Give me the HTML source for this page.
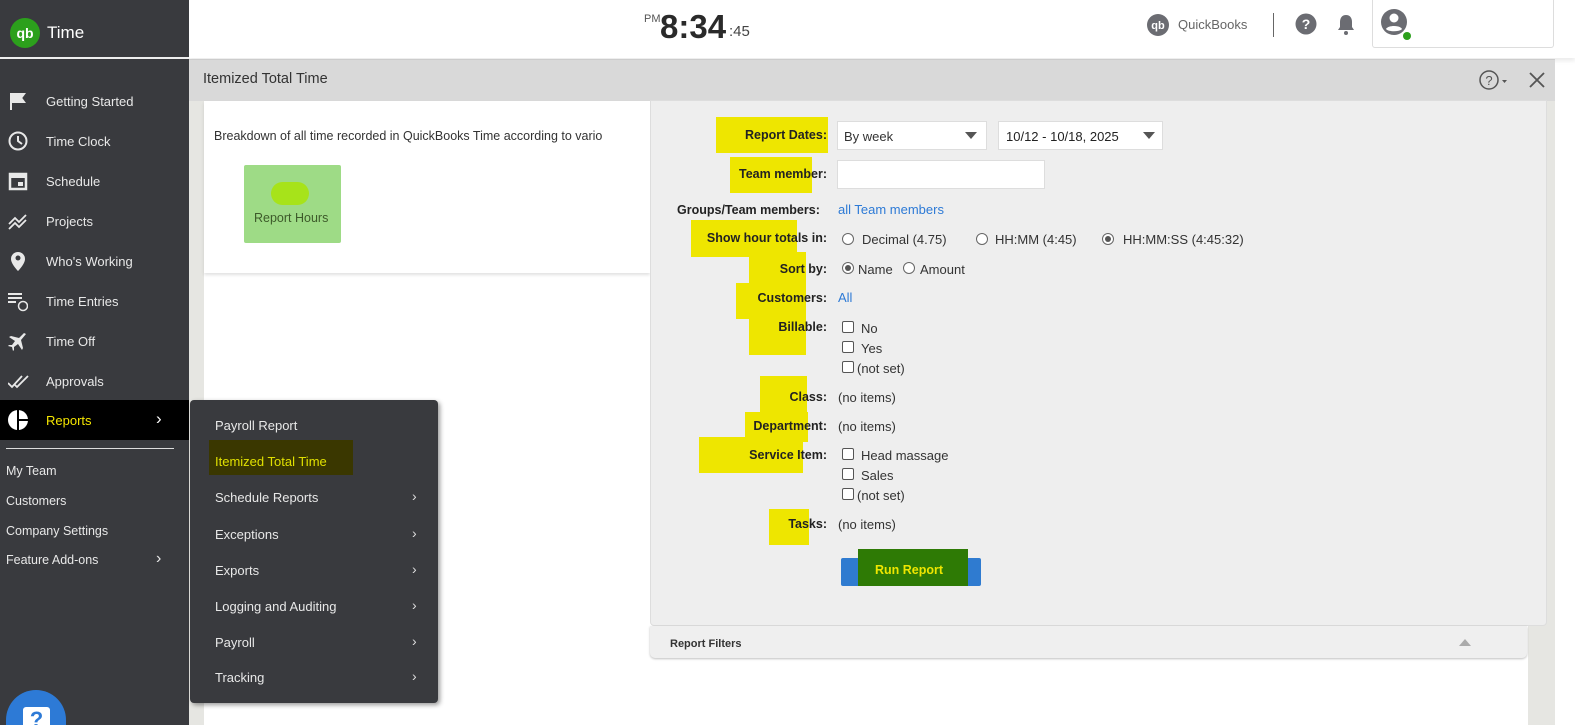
<!DOCTYPE html>
<html style="width:1575px;height:725px;overflow:hidden"><head><meta charset="utf-8"><style>
*{box-sizing:border-box;margin:0;padding:0}
body{width:1575px;height:725px;overflow:hidden;position:relative;background:#fff;font-family:"Liberation Sans",sans-serif;}
.abs{position:absolute}
.side{left:0;top:0;width:189px;height:725px;background:#393a3e;}
.nav{position:absolute;left:0;width:189px;height:40px;color:#e8e8e8;font-size:13px;}
.nav span{position:absolute;left:46px;top:13px}
.nav svg{position:absolute;left:8px;top:10px}
.lk{position:absolute;left:6px;color:#e8e8e8;font-size:12.5px}
.menu{left:190px;top:400px;width:248px;height:303px;background:#393a3e;border-radius:4px;box-shadow:2px 2px 5px rgba(0,0,0,.4)}
.mi{position:absolute;left:25px;color:#e8e8e8;font-size:13px}
.chev{position:absolute;left:222px;color:#ddd;font-size:14px}
.lbl{position:absolute;font-weight:bold;font-size:12.5px;color:#222;text-align:right}
.hl{position:absolute;background:#eee600}
.t{position:absolute;font-size:13px;color:#333}
.rad{position:absolute;width:12px;height:12px;border:1px solid #666;border-radius:50%;background:#fff}
.rad.on::after{content:"";position:absolute;left:2px;top:2px;width:6px;height:6px;border-radius:50%;background:#555}
.cb{position:absolute;width:12px;height:12px;border:1px solid #555;border-radius:2px;background:#fff}
.blue{color:#2d7ad6}
</style></head><body>
<div class="abs" style="left:189px;top:0;width:1386px;height:58px;background:#fff;box-shadow:0 3px 4px rgba(0,0,0,.08)"></div>
<div class="abs" style="left:644px;top:13px;font-size:11px;color:#555">PM</div>
<div class="abs" style="left:660px;top:8px;font-size:33px;font-weight:bold;color:#2a2a2a">8:34</div>
<div class="abs" style="left:729px;top:23px;font-size:15px;color:#444">:45</div>
<svg class="abs" style="left:1146px;top:13px" width="24" height="24"><circle cx="12" cy="12" r="11" fill="#6b6c72"/><text x="12" y="16" font-size="11" fill="#fff" text-anchor="middle" font-family="Liberation Sans" font-weight="bold">qb</text></svg>
<div class="abs" style="left:1178px;top:17px;font-size:13px;color:#666">QuickBooks</div>
<div class="abs" style="left:1273px;top:13px;width:1px;height:24px;background:#666"></div>
<svg class="abs" style="left:1295px;top:13px" width="22" height="22"><circle cx="11" cy="11" r="10.5" fill="#6b6c72"/><text x="11" y="16" font-size="14" fill="#fff" text-anchor="middle" font-weight="bold" font-family="Liberation Sans">?</text></svg>
<svg class="abs" style="left:1336px;top:13px" width="20" height="24"><path d="M10 2c-4 0-6 3-6 7v5l-2 3h16l-2-3V9c0-4-2-7-6-7z" fill="#6b6c72"/><circle cx="10" cy="20" r="2" fill="#6b6c72"/></svg>
<div class="abs" style="left:1372px;top:0;width:182px;height:48px;border:1px solid #ddd;border-top:none;border-radius:0 0 3px 3px;background:#fff"></div>
<svg class="abs" style="left:1380px;top:8px" width="32" height="32"><circle cx="14" cy="14" r="13" fill="#6b6c72"/><circle cx="14" cy="10" r="4.5" fill="#fff"/><path d="M6 21c2-4 14-4 16 0c-2 3-14 3-16 0z" fill="#fff"/><circle cx="27" cy="28" r="4" fill="#2ca01c"/></svg>
<div class="abs side"></div>
<svg class="abs" style="left:10px;top:18px" width="30" height="30"><circle cx="15" cy="15" r="15" fill="#2ca01c"/><text x="15" y="20" font-size="14" font-weight="bold" fill="#fff" text-anchor="middle" font-family="Liberation Sans">qb</text></svg>
<div class="abs" style="left:47px;top:23px;font-size:17px;color:#fff">Time</div>
<div class="abs" style="left:0;top:57px;width:189px;height:2px;background:#eee"></div>
<div class="nav" style="top:81px"><svg width="20" height="20"><path d="M3 2v17M3 3h13l-3 4 3 4H3" fill="#e8e8e8" stroke="#e8e8e8" stroke-width="2"/></svg><span>Getting Started</span></div>
<div class="nav" style="top:121px"><svg width="20" height="20"><circle cx="10" cy="10" r="8.5" fill="none" stroke="#e8e8e8" stroke-width="2"/><path d="M10 5v5l4 3" stroke="#e8e8e8" stroke-width="2" fill="none"/></svg><span>Time Clock</span></div>
<div class="nav" style="top:161px"><svg width="20" height="20"><rect x="2" y="3" width="16" height="15" fill="none" stroke="#e8e8e8" stroke-width="2.5"/><rect x="2" y="3" width="16" height="4" fill="#e8e8e8"/><rect x="10" y="11" width="5" height="4" fill="#e8e8e8"/></svg><span>Schedule</span></div>
<div class="nav" style="top:201px"><svg width="20" height="20"><path d="M1 13l6-6 4 4 7-7M1 18l6-6 4 4 7-7" stroke="#e8e8e8" stroke-width="1.8" fill="none"/></svg><span>Projects</span></div>
<div class="nav" style="top:241px"><svg width="20" height="20"><path d="M10 1a7 7 0 0 0-7 7c0 5 7 12 7 12s7-7 7-12a7 7 0 0 0-7-7z" fill="#e8e8e8"/><circle cx="10" cy="7" r="2.5" fill="#393a3e"/></svg><span>Who's Working</span></div>
<div class="nav" style="top:281px"><svg width="20" height="22"><path d="M0 3h14M0 7h14M0 11h8" stroke="#e8e8e8" stroke-width="2"/><circle cx="15" cy="15" r="4.5" fill="none" stroke="#e8e8e8" stroke-width="1.5"/></svg><span>Time Entries</span></div>
<div class="nav" style="top:321px"><svg width="20" height="20"><path d="M18 3l-2-1-5 5-8-2-2 1 6 4-3 4H1l-1 1 4 1 1 4 1-1v-3l4-3 4 6 1-2-2-8z" fill="#e8e8e8"/></svg><span>Time Off</span></div>
<div class="nav" style="top:361px"><svg width="24" height="20"><path d="M0 12l4 4 10-11M7 14l2 2 11-11" stroke="#e8e8e8" stroke-width="1.8" fill="none"/></svg><span>Approvals</span></div>
<div class="nav" style="top:400px;background:#000"><svg width="22" height="22"><circle cx="10" cy="10" r="10" fill="#fff"/><path d="M10 0v20M10 10h10" stroke="#000" stroke-width="2"/></svg><span style="color:#f5e600">Reports</span><span style="left:156px;top:9px;font-size:17px;color:#fff">›</span></div>
<div class="abs" style="left:6px;top:448px;width:168px;height:1px;background:#ddd"></div>
<div class="lk" style="top:464px">My Team</div>
<div class="lk" style="top:494px">Customers</div>
<div class="lk" style="top:524px">Company Settings</div>
<div class="lk" style="top:553px">Feature Add-ons</div>
<div class="lk" style="top:550px;left:156px;font-size:16px">›</div>
<div class="abs" style="left:6px;top:690px;width:60px;height:35px;border-radius:30px 30px 0 0;background:#2d7ad6;overflow:hidden"><div style="position:absolute;left:17px;top:17px;width:27px;height:27px;background:#fff;border-radius:3px;color:#2d7ad6;font-weight:bold;font-size:22px;text-align:center">?</div></div>
<div class="abs" style="left:189px;top:59px;width:1366px;height:666px;background:#e6e6e2"></div>
<div class="abs" style="left:189px;top:59px;width:1366px;height:42px;background:#d9d9d9;border-top:1px solid #ccc"></div>
<div class="abs" style="left:203px;top:71px;font-size:14.5px;color:#333">Itemized Total Time</div>
<svg class="abs" style="left:1479px;top:69px" width="30" height="22"><circle cx="10" cy="11" r="9" fill="none" stroke="#555" stroke-width="1.5"/><text x="10" y="16" font-size="13" fill="#555" text-anchor="middle" font-family="Liberation Sans">?</text><path d="M23 11h5l-2.5 3z" fill="#555"/></svg>
<svg class="abs" style="left:1528px;top:71px" width="18" height="18"><path d="M2 2l14 14M16 2L2 16" stroke="#555" stroke-width="1.8"/></svg>
<div class="abs" style="left:204px;top:101px;width:1324px;height:624px;background:#fff"></div>
<div class="abs" style="left:1528px;top:101px;width:24px;height:624px;background:#e6e6e2"></div>
<div class="abs" style="left:204px;top:101px;width:446px;height:172px;background:#fff;box-shadow:0 2px 3px rgba(0,0,0,.12)"></div>
<div class="abs" style="left:214px;top:129px;font-size:12.5px;color:#333">Breakdown of all time recorded in QuickBooks Time according to vario</div>
<div class="abs" style="left:244px;top:165px;width:97px;height:78px;background:#9edb86;border-radius:2px"></div>
<div class="abs" style="left:271px;top:182px;width:38px;height:23px;border-radius:12px;background:#a7e31a"></div>
<div class="abs" style="left:254px;top:211px;font-size:12.5px;color:#3d5a2a">Report Hours</div>
<div class="abs" style="left:650px;top:100px;width:897px;height:526px;background:#eeeeee;border:1px solid #ddd;border-radius:0 0 4px 4px"></div>
<div class="abs" style="left:650px;top:626px;width:877px;height:32px;background:#efefef;border-radius:0 0 5px 5px;box-shadow:0 1px 2px rgba(0,0,0,.25)"></div>
<div class="abs" style="left:670px;top:638px;font-size:11px;font-weight:bold;color:#333">Report Filters</div>
<div class="abs" style="left:1459px;top:639px;width:0;height:0;border-left:6px solid transparent;border-right:6px solid transparent;border-bottom:7px solid #aaa"></div>
<div class="hl" style="left:716px;top:117px;width:112px;height:36px"></div>
<div class="hl" style="left:730px;top:157px;width:82px;height:36px"></div>
<div class="hl" style="left:691px;top:220px;width:106px;height:37px"></div>
<div class="hl" style="left:749px;top:252px;width:57px;height:32px"></div>
<div class="hl" style="left:736px;top:283px;width:70px;height:36px"></div>
<div class="hl" style="left:749px;top:319px;width:57px;height:36px"></div>
<div class="hl" style="left:760px;top:376px;width:47px;height:36px"></div>
<div class="hl" style="left:745px;top:412px;width:63px;height:30px"></div>
<div class="hl" style="left:699px;top:437px;width:104px;height:36px"></div>
<div class="hl" style="left:769px;top:509px;width:40px;height:36px"></div>
<div class="lbl" style="right:748px;top:128px">Report Dates:</div>
<div class="lbl" style="right:748px;top:167px">Team member:</div>
<div class="lbl" style="left:677px;top:203px">Groups/Team members:</div>
<div class="t blue" style="left:838px;top:202px">all Team members</div>
<div class="lbl" style="right:748px;top:231px">Show hour totals in:</div>
<div class="lbl" style="right:748px;top:262px">Sort by:</div>
<div class="lbl" style="right:748px;top:291px">Customers:</div>
<div class="t blue" style="left:838px;top:290px">All</div>
<div class="lbl" style="right:748px;top:320px">Billable:</div>
<div class="lbl" style="right:748px;top:390px">Class:</div>
<div class="lbl" style="right:748px;top:419px">Department:</div>
<div class="lbl" style="right:748px;top:448px">Service Item:</div>
<div class="lbl" style="right:748px;top:517px">Tasks:</div>
<div class="abs" style="left:837px;top:121px;width:150px;height:29px;background:#fff;border:1px solid #ddd"></div>
<div class="t" style="left:844px;top:129px">By week</div>
<div class="abs" style="left:965px;top:132px;border-left:6px solid transparent;border-right:6px solid transparent;border-top:7px solid #555"></div>
<div class="abs" style="left:998px;top:121px;width:165px;height:29px;background:#fff;border:1px solid #ddd"></div>
<div class="t" style="left:1006px;top:129px;color:#222">10/12 - 10/18, 2025</div>
<div class="abs" style="left:1143px;top:132px;border-left:6px solid transparent;border-right:6px solid transparent;border-top:7px solid #555"></div>
<div class="abs" style="left:837px;top:160px;width:208px;height:29px;background:#fff;border:1px solid #ddd"></div>
<div class="rad" style="left:842px;top:233px"></div><div class="t" style="left:862px;top:232px">Decimal (4.75)</div>
<div class="rad" style="left:976px;top:233px"></div><div class="t" style="left:995px;top:232px">HH:MM (4:45)</div>
<div class="rad on" style="left:1102px;top:233px"></div><div class="t" style="left:1123px;top:232px">HH:MM:SS (4:45:32)</div>
<div class="rad on" style="left:842px;top:262px"></div><div class="t" style="left:858px;top:262px">Name</div>
<div class="rad" style="left:903px;top:262px"></div><div class="t" style="left:920px;top:262px">Amount</div>
<div class="cb" style="left:842px;top:321px"></div><div class="t" style="left:861px;top:321px">No</div>
<div class="cb" style="left:842px;top:341px"></div><div class="t" style="left:861px;top:341px">Yes</div>
<div class="cb" style="left:842px;top:361px"></div><div class="t" style="left:857px;top:361px">(not set)</div>
<div class="t" style="left:838px;top:390px">(no items)</div>
<div class="t" style="left:838px;top:419px">(no items)</div>
<div class="cb" style="left:842px;top:448px"></div><div class="t" style="left:861px;top:448px">Head massage</div>
<div class="cb" style="left:842px;top:468px"></div><div class="t" style="left:861px;top:468px">Sales</div>
<div class="cb" style="left:842px;top:488px"></div><div class="t" style="left:857px;top:488px">(not set)</div>
<div class="t" style="left:838px;top:517px">(no items)</div>
<div class="abs" style="left:841px;top:558px;width:140px;height:28px;background:#2f7bd0;border-radius:2px"></div>
<div class="abs" style="left:858px;top:549px;width:110px;height:37px;background:#2e7a05"></div>
<div class="abs" style="left:875px;top:563px;font-size:12.5px;font-weight:bold;color:#eee600">Run Report</div>
<div class="abs menu">
<div class="mi" style="top:18px">Payroll Report</div>
<div class="abs" style="left:19px;top:40px;width:144px;height:35px;background:#3a3700"></div>
<div class="mi" style="top:54px;color:#e0e000">Itemized Total Time</div>
<div class="mi" style="top:90px">Schedule Reports</div><div class="chev" style="top:88px">›</div>
<div class="mi" style="top:127px">Exceptions</div><div class="chev" style="top:125px">›</div>
<div class="mi" style="top:163px">Exports</div><div class="chev" style="top:161px">›</div>
<div class="mi" style="top:199px">Logging and Auditing</div><div class="chev" style="top:197px">›</div>
<div class="mi" style="top:235px">Payroll</div><div class="chev" style="top:233px">›</div>
<div class="mi" style="top:270px">Tracking</div><div class="chev" style="top:268px">›</div>
</div>
</body></html>
